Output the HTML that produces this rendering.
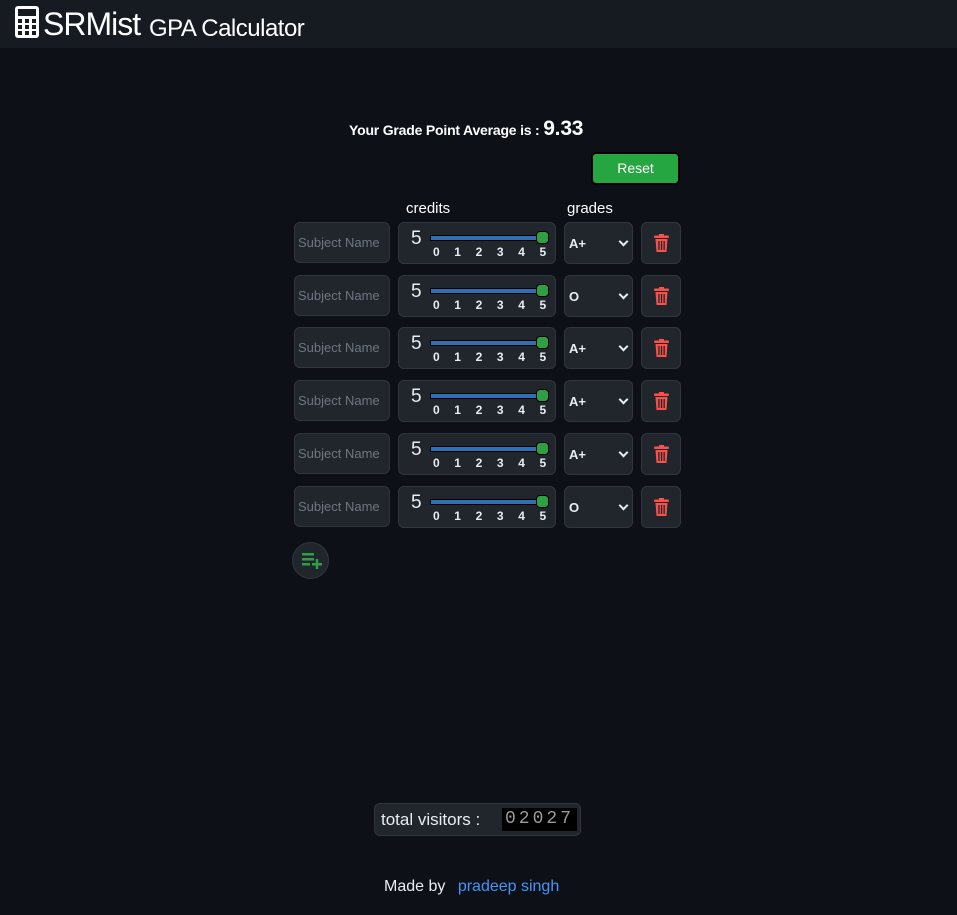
<!DOCTYPE html>
<html><head><meta charset="utf-8"><style>
*{box-sizing:border-box;margin:0;padding:0}
body{width:957px;height:915px;background:#0d1117;font-family:"Liberation Sans",sans-serif;color:#fff;position:relative;overflow:hidden}
.hdr{position:absolute;left:0;top:0;width:957px;height:48px;background:#161b22}
.abs{position:absolute}
.inp{position:absolute;left:294px;width:96px;height:41px;border:1px solid #30363d;border-radius:6px;background:#21262d;color:#6e7681;font-size:13px;line-height:39px;padding-left:3px;white-space:nowrap;overflow:hidden}
.sl{position:absolute;left:398px;width:158px;height:42px;border:1px solid #30363d;border-radius:6px;background:#21262d}
.sl .n{position:absolute;left:12px;top:5px;font-size:19px;color:#e6edf3}
.sl .tr{position:absolute;left:31px;top:12px;width:113px;height:6px;background:#2f6fb3;border:1px solid #000}
.sl .th{position:absolute;left:137px;top:8px;width:13px;height:13px;border-radius:4px;background:#2ea043;border:1px solid #000}
.sl .t{position:absolute;top:22px;font-size:12px;font-weight:bold;color:#e6edf3}
.sel{position:absolute;left:564px;width:69px;height:42px;border:1px solid #30363d;border-radius:6px;background:#21262d;font-size:13px;font-weight:bold;color:#e6edf3;padding:13px 0 0 4px}
.sel .c{position:absolute;right:5px;top:15px;width:7px;height:7px;border-right:2px solid #e6edf3;border-bottom:2px solid #e6edf3;transform:rotate(45deg)}
.del{position:absolute;left:641px;width:40px;height:42px;border:1px solid #30363d;border-radius:6px;background:#21262d}
</style></head><body>
<div class="hdr">
<svg class="abs" style="left:15px;top:6px" width="24" height="32" viewBox="0 0 24 32"><rect x="0" y="0" width="24" height="32" rx="3" fill="#fff"/><rect x="3" y="3" width="18" height="7" fill="#161b22"/><g fill="#161b22"><rect x="3" y="13" width="4" height="4"/><rect x="10" y="13" width="4" height="4"/><rect x="17" y="13" width="4" height="4"/><rect x="3" y="19" width="4" height="4"/><rect x="10" y="19" width="4" height="4"/><rect x="17" y="19" width="4" height="4"/><rect x="3" y="25" width="4" height="4"/><rect x="10" y="25" width="4" height="4"/><rect x="17" y="25" width="4" height="4"/></g></svg>
<div class="abs" style="left:43px;top:6px;font-size:32px;color:#fff;letter-spacing:-1px">SRMist</div>
<div class="abs" style="left:149px;top:15px;font-size:24px;color:#fff;letter-spacing:-0.5px">GPA Calculator</div>
</div>
<div class="abs" style="left:349px;top:117px;font-size:14px;font-weight:bold;letter-spacing:-0.2px">Your Grade Point Average is : <span style="font-size:21px">9.33</span></div>
<div class="abs" style="left:591px;top:152px;width:89px;height:33px;border-radius:5px;background:#26a641;border:2px solid #000;font-size:14px;text-align:center;line-height:29px;color:#fff">Reset</div>
<div class="abs" style="left:406px;top:200px;font-size:15px">credits</div>
<div class="abs" style="left:567px;top:200px;font-size:15px">grades</div>
<div id="rows"></div>
<div class="abs" style="left:292px;top:542px;width:37px;height:37px;border-radius:50%;background:#21262d;border:1px solid #30363d">
<svg class="abs" style="left:9px;top:10px" width="20" height="16" viewBox="0 0 20 16" fill="#2ea043"><rect x="0" y="0" width="12" height="2.5"/><rect x="0" y="5" width="12" height="2.5"/><rect x="0" y="10" width="8" height="2.5"/><rect x="10" y="10" width="10" height="2.5"/><rect x="13.75" y="6" width="2.5" height="10"/></svg></div>
<div class="abs" style="left:374px;top:803px;width:207px;height:33px;border:1px solid #30363d;border-radius:6px;background:#21262d">
<div class="abs" style="left:6px;top:6px;font-size:17px;color:#e6edf3">total visitors :</div>
<div class="abs" style="left:127px;top:4px;width:75px;height:23px;background:#000;font-family:'Liberation Mono',monospace;font-size:18px;color:#999;letter-spacing:3px;padding-left:3px;line-height:23px">02027</div>
</div>
<div class="abs" style="left:384px;top:878px;font-size:16px;color:#e6edf3">Made by <span style="margin-left:8px;color:#4493f8">pradeep singh</span></div>
<script>
var tops=[222,275,327,380,433,486],g=["A+","O","A+","A+","A+","O"],h="";
tops.forEach(function(t,i){
h+='<div class="inp" style="top:'+t+'px">Subject Name</div>';
h+='<div class="sl" style="top:'+t+'px"><div class="n">5</div><div class="tr"></div><div class="th"></div>';
for(var k=0;k<6;k++)h+='<div class="t" style="left:'+(34+k*21.3)+'px">'+k+'</div>';
h+='</div><div class="sel" style="top:'+t+'px">'+g[i]+'<div class="c"></div></div>';
h+='<div class="del" style="top:'+t+'px"><svg style="position:absolute;left:12px;top:11px" width="15" height="18" viewBox="0 0 15 18" fill="#f85149"><rect x="0" y="1.5" width="15" height="2.5" rx="1"/><rect x="5" y="0" width="5" height="2"/><path d="M1.5 5h12l-1 13h-10z"/><g fill="#21262d"><rect x="4.3" y="7" width="1.3" height="9"/><rect x="6.9" y="7" width="1.3" height="9"/><rect x="9.5" y="7" width="1.3" height="9"/></g></svg></div>';
});
document.getElementById("rows").innerHTML=h;
</script>
</body></html>
